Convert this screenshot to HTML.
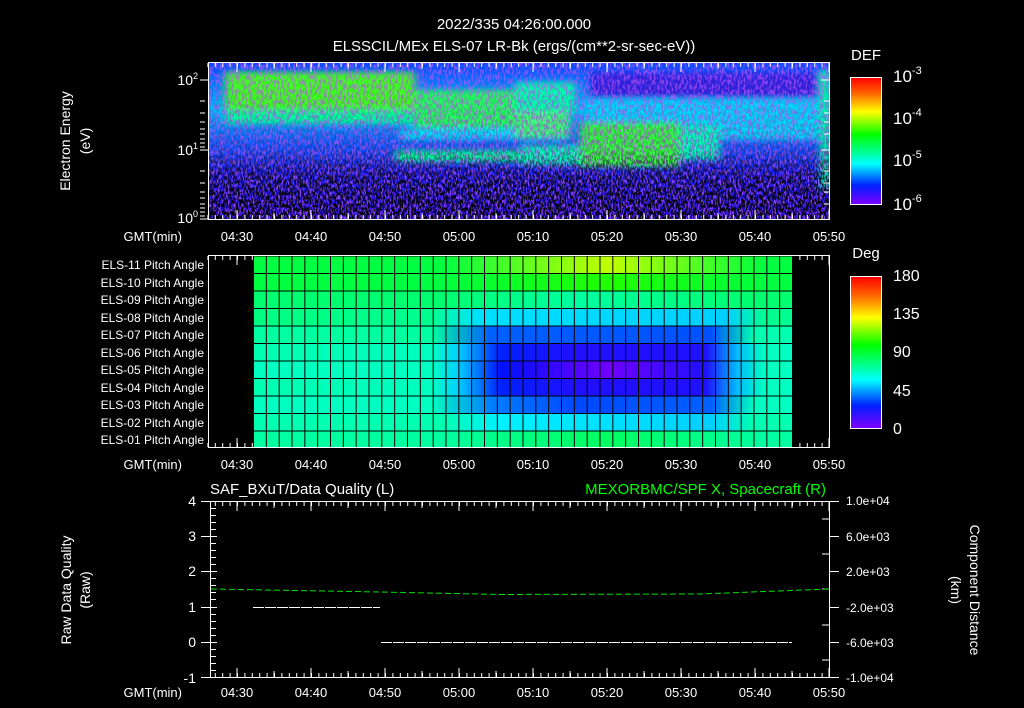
<!DOCTYPE html>
<html><head><meta charset="utf-8"><style>
html,body{margin:0;padding:0;background:#000;}
svg{display:block}
text{font-family:"Liberation Sans",sans-serif;fill:#fff;font-size:13px}
</style></head><body>
<svg width="1024" height="708" viewBox="0 0 1024 708" xmlns="http://www.w3.org/2000/svg">
<defs>
<linearGradient id="cb" x1="0" y1="0" x2="0" y2="1">
<stop offset="0" stop-color="#ff0000"/><stop offset="0.12" stop-color="#ff6000"/><stop offset="0.27" stop-color="#ffff00"/><stop offset="0.45" stop-color="#00ff00"/><stop offset="0.6" stop-color="#00ffa0"/><stop offset="0.68" stop-color="#00ffff"/><stop offset="0.85" stop-color="#0020ff"/><stop offset="1" stop-color="#8000ff"/></linearGradient>
<linearGradient id="spb" x1="0" y1="0" x2="0" y2="1">
<stop offset="0" stop-color="#1040ff"/><stop offset="0.3" stop-color="#00c0ff"/><stop offset="0.5" stop-color="#1060ff"/><stop offset="0.7" stop-color="#2020f0"/><stop offset="1" stop-color="#3010d0"/></linearGradient>
<filter id="nz" x="0" y="0" width="1" height="1"><feTurbulence type="fractalNoise" baseFrequency="0.6 0.25" numOctaves="2" seed="3"/><feColorMatrix type="matrix" values="0 0 0 0 0  0 0 0 0 0  0 0 0 0 0  0 0 0 -9 5"/></filter>
<filter id="nz2" x="0" y="0" width="1" height="1"><feTurbulence type="fractalNoise" baseFrequency="0.5 0.2" numOctaves="2" seed="7"/><feColorMatrix type="matrix" values="0 0 0 0 0.5  0 0 0 0 0.1  0 0 0 0 1  0 0 0 -8 4.2"/></filter>
<filter id="bl"><feGaussianBlur stdDeviation="4 3"/></filter>
<linearGradient id="fade" x1="0" y1="0" x2="0" y2="1"><stop offset="0" stop-color="#fff" stop-opacity="0"/><stop offset="0.55" stop-color="#fff" stop-opacity="0.2"/><stop offset="0.75" stop-color="#fff" stop-opacity="0.8"/><stop offset="1" stop-color="#fff" stop-opacity="1"/></linearGradient>
<mask id="fm"><rect x="208" y="62" width="621" height="158" fill="url(#fade)"/></mask>
<clipPath id="c1"><rect x="209" y="63" width="620" height="156"/></clipPath>

<linearGradient id="r1" gradientUnits="userSpaceOnUse" x1="253" y1="0" x2="792" y2="0"><stop offset="0" stop-color="#00ff40"/><stop offset="0.35" stop-color="#00ff40"/><stop offset="0.66" stop-color="#c0ff00"/><stop offset="0.95" stop-color="#00ff40"/></linearGradient>
<linearGradient id="r2" gradientUnits="userSpaceOnUse" x1="253" y1="0" x2="792" y2="0"><stop offset="0" stop-color="#00ff40"/><stop offset="0.35" stop-color="#00ff40"/><stop offset="0.66" stop-color="#20ff00"/><stop offset="0.95" stop-color="#00ff40"/></linearGradient>
<linearGradient id="r3" gradientUnits="userSpaceOnUse" x1="253" y1="0" x2="792" y2="0"><stop offset="0" stop-color="#00ff70"/><stop offset="0.35" stop-color="#00ff70"/><stop offset="0.6" stop-color="#00ffa0"/><stop offset="0.93" stop-color="#00ff70"/></linearGradient>
<linearGradient id="r4" gradientUnits="userSpaceOnUse" x1="253" y1="0" x2="792" y2="0"><stop offset="0" stop-color="#00ff80"/><stop offset="0.33" stop-color="#00ff90"/><stop offset="0.42" stop-color="#00e0ff"/><stop offset="0.88" stop-color="#00d0ff"/><stop offset="0.95" stop-color="#00ff90"/></linearGradient>
<linearGradient id="r5" gradientUnits="userSpaceOnUse" x1="253" y1="0" x2="792" y2="0"><stop offset="0" stop-color="#00ffa0"/><stop offset="0.33" stop-color="#00ffa0"/><stop offset="0.44" stop-color="#0060ff"/><stop offset="0.85" stop-color="#0050ff"/><stop offset="0.93" stop-color="#00ffb0"/></linearGradient>
<linearGradient id="r6" gradientUnits="userSpaceOnUse" x1="253" y1="0" x2="792" y2="0"><stop offset="0" stop-color="#00ffb0"/><stop offset="0.33" stop-color="#00ffc0"/><stop offset="0.38" stop-color="#00d0ff"/><stop offset="0.46" stop-color="#0020ff"/><stop offset="0.6" stop-color="#2010ff"/><stop offset="0.84" stop-color="#2010ff"/><stop offset="0.9" stop-color="#00c0ff"/><stop offset="0.95" stop-color="#00ffc0"/></linearGradient>
<linearGradient id="r7" gradientUnits="userSpaceOnUse" x1="253" y1="0" x2="792" y2="0"><stop offset="0" stop-color="#00ffc0"/><stop offset="0.33" stop-color="#00ffc0"/><stop offset="0.38" stop-color="#00d0ff"/><stop offset="0.46" stop-color="#0010ff"/><stop offset="0.66" stop-color="#7000ff"/><stop offset="0.84" stop-color="#2010ff"/><stop offset="0.9" stop-color="#00c0ff"/><stop offset="0.95" stop-color="#00ffc0"/></linearGradient>
<linearGradient id="r9" gradientUnits="userSpaceOnUse" x1="253" y1="0" x2="792" y2="0"><stop offset="0" stop-color="#00ffc0"/><stop offset="0.33" stop-color="#00ffc0"/><stop offset="0.44" stop-color="#0080ff"/><stop offset="0.6" stop-color="#0048ff"/><stop offset="0.85" stop-color="#0060ff"/><stop offset="0.93" stop-color="#00ffc0"/></linearGradient>
<linearGradient id="r10" gradientUnits="userSpaceOnUse" x1="253" y1="0" x2="792" y2="0"><stop offset="0" stop-color="#00ffb0"/><stop offset="0.35" stop-color="#00ffb0"/><stop offset="0.46" stop-color="#00f0ff"/><stop offset="0.85" stop-color="#00d0ff"/><stop offset="0.93" stop-color="#00ffb0"/></linearGradient>
<linearGradient id="r11" gradientUnits="userSpaceOnUse" x1="253" y1="0" x2="792" y2="0"><stop offset="0" stop-color="#00ffa0"/><stop offset="0.35" stop-color="#00ffa0"/><stop offset="0.66" stop-color="#00ff60"/><stop offset="0.95" stop-color="#00ffa0"/></linearGradient>

<pattern id="grid" patternUnits="userSpaceOnUse" x="253" y="255.5" width="12.833" height="17.5"><path d="M0 0H12.833M0 0V17.5" stroke="#000" stroke-width="2" fill="none"/></pattern>
</defs>

<text x="514" y="29" text-anchor="middle" style="font-size:15px">2022/335 04:26:00.000</text>
<text x="514" y="51" text-anchor="middle" style="font-size:15px">ELSSCIL/MEx ELS-07 LR-Bk  (ergs/(cm**2-sr-sec-eV))</text>

<!-- top spectrogram -->
<g clip-path="url(#c1)">
<rect x="208" y="62" width="621" height="158" fill="url(#spb)"/>
<g filter="url(#bl)">
<rect x="225" y="72" width="190" height="45" fill="#40ff20"/>
<rect x="225" y="110" width="190" height="14" fill="#00ffa0"/>
<rect x="415" y="90" width="150" height="40" fill="#20ff60"/>
<rect x="400" y="128" width="170" height="12" fill="#00e0ff"/>
<rect x="395" y="150" width="180" height="12" fill="#00ffa0"/>
<rect x="585" y="100" width="240" height="40" fill="#00d8ff"/>
<rect x="515" y="82" width="60" height="30" fill="#00ffb0"/>
<rect x="515" y="112" width="55" height="26" fill="#40ff80"/>
<rect x="520" y="145" width="60" height="20" fill="#00ffc0"/>
<rect x="580" y="122" width="100" height="45" fill="#30ff40"/>
<rect x="680" y="125" width="40" height="35" fill="#00ffc0"/>
<rect x="820" y="70" width="10" height="120" fill="#00ffa0"/>
<rect x="590" y="72" width="230" height="25" fill="#3020e0"/>
</g>
<rect x="208" y="62" width="621" height="158" filter="url(#nz2)" opacity="0.6"/>
<g mask="url(#fm)"><rect x="208" y="62" width="621" height="158" filter="url(#nz)"/></g>
</g>
<rect x="208.5" y="62.5" width="621" height="157" fill="none" stroke="#fff"/>

<!-- x ticks via dasharray -->
<g stroke="#fff" fill="none">
<!-- top panel -->
<path d="M207.4 65H829" stroke-width="4" stroke-dasharray="1 6.4"/>
<path d="M236.5 67.5H829" stroke-width="9" stroke-dasharray="1 73"/>
<path d="M273.5 66H829" stroke-width="6" stroke-dasharray="1 73"/>
<path d="M207.4 217H829" stroke-width="4" stroke-dasharray="1 6.4"/>
<path d="M236.5 214.5H829" stroke-width="9" stroke-dasharray="1 73"/>
<path d="M273.5 216H829" stroke-width="6" stroke-dasharray="1 73"/>
<!-- middle -->
<path d="M207.4 258H829" stroke-width="4" stroke-dasharray="1 6.4"/>
<path d="M236.5 260.5H829" stroke-width="9" stroke-dasharray="1 73"/>
<path d="M273.5 259H829" stroke-width="6" stroke-dasharray="1 73"/>
<path d="M207.4 445H829" stroke-width="4" stroke-dasharray="1 6.4"/>
<path d="M236.5 442.5H829" stroke-width="9" stroke-dasharray="1 73"/>
<path d="M273.5 444H829" stroke-width="6" stroke-dasharray="1 73"/>
<!-- bottom -->
<path d="M214.8 504H829" stroke-width="4" stroke-dasharray="1 6.4"/>
<path d="M236.5 506.5H829" stroke-width="9" stroke-dasharray="1 73"/>
<path d="M273.5 505H829" stroke-width="6" stroke-dasharray="1 73"/>
<path d="M214.8 675H829" stroke-width="4" stroke-dasharray="1 6.4"/>
<path d="M236.5 672.5H829" stroke-width="9" stroke-dasharray="1 73"/>
<path d="M273.5 674H829" stroke-width="6" stroke-dasharray="1 73"/>
</g>

<path d="M200 80h8M200 150h8M200 219h8M200 101h5M200 113h5M200 122h5M200 129h5M200 134h5M200 139h5M200 143h5M200 147h5M200 171h5M200 183h5M200 192h5M200 198h5M200 204h5M200 208h5M200 212h5M200 216h5M829 80h-8M829 150h-8M829 101h-5M829 113h-5M829 122h-5M829 134h-5M829 171h-5M829 183h-5M829 192h-5M829 204h-5" stroke="#fff"/>
<text x="198" y="85" text-anchor="end" style="font-size:14px">10<tspan dy="-6" style="font-size:9px">2</tspan></text>
<text x="198" y="155" text-anchor="end" style="font-size:14px">10<tspan dy="-6" style="font-size:9px">1</tspan></text>
<text x="198" y="223" text-anchor="end" style="font-size:14px">10<tspan dy="-6" style="font-size:9px">0</tspan></text>
<text transform="translate(70,141) rotate(-90)" text-anchor="middle" style="font-size:14px">Electron Energy</text>
<text transform="translate(90,141) rotate(-90)" text-anchor="middle" style="font-size:14px">(eV)</text>
<text x="866" y="60" text-anchor="middle" style="font-size:15px">DEF</text>
<rect x="850.5" y="77.5" width="31" height="127" fill="url(#cb)" stroke="#fff"/>
<text x="893" y="82" style="font-size:17px">10<tspan dy="-8" style="font-size:11px">-3</tspan></text>
<text x="893" y="124" style="font-size:17px">10<tspan dy="-8" style="font-size:11px">-4</tspan></text>
<text x="893" y="166" style="font-size:17px">10<tspan dy="-8" style="font-size:11px">-5</tspan></text>
<text x="893" y="210" style="font-size:17px">10<tspan dy="-8" style="font-size:11px">-6</tspan></text>

<!-- middle pitch angle -->
<rect x="253" y="255.5" width="539" height="17.5" fill="url(#r1)"/>
<rect x="253" y="273" width="539" height="17.5" fill="url(#r2)"/>
<rect x="253" y="290.5" width="539" height="17.5" fill="url(#r3)"/>
<rect x="253" y="308" width="539" height="17.5" fill="url(#r4)"/>
<rect x="253" y="325.5" width="539" height="17.5" fill="url(#r5)"/>
<rect x="253" y="343" width="539" height="17.5" fill="url(#r6)"/>
<rect x="253" y="360.5" width="539" height="17.5" fill="url(#r7)"/>
<rect x="253" y="378" width="539" height="17.5" fill="url(#r6)"/>
<rect x="253" y="395.5" width="539" height="17.5" fill="url(#r9)"/>
<rect x="253" y="413" width="539" height="17.5" fill="url(#r10)"/>
<rect x="253" y="430.5" width="539" height="17.5" fill="url(#r11)"/>
<rect x="253" y="255.5" width="540" height="193" fill="url(#grid)"/>
<rect x="208.5" y="255.5" width="621" height="192" fill="none" stroke="#fff"/>
<g text-anchor="end">
<text x="204" y="269" style="font-size:12px">ELS-11 Pitch Angle</text><text x="204" y="287" style="font-size:12px">ELS-10 Pitch Angle</text><text x="204" y="304" style="font-size:12px">ELS-09 Pitch Angle</text><text x="204" y="322" style="font-size:12px">ELS-08 Pitch Angle</text><text x="204" y="339" style="font-size:12px">ELS-07 Pitch Angle</text><text x="204" y="357" style="font-size:12px">ELS-06 Pitch Angle</text><text x="204" y="374" style="font-size:12px">ELS-05 Pitch Angle</text><text x="204" y="392" style="font-size:12px">ELS-04 Pitch Angle</text><text x="204" y="409" style="font-size:12px">ELS-03 Pitch Angle</text><text x="204" y="427" style="font-size:12px">ELS-02 Pitch Angle</text><text x="204" y="444" style="font-size:12px">ELS-01 Pitch Angle</text>
</g>
<text x="866" y="258" text-anchor="middle" style="font-size:15px">Deg</text>
<rect x="850.5" y="276.5" width="31" height="152" fill="url(#cb)" stroke="#fff"/>
<text x="893" y="281" style="font-size:16px">180</text><text x="893" y="319" style="font-size:16px">135</text><text x="893" y="357" style="font-size:16px">90</text><text x="893" y="396" style="font-size:16px">45</text><text x="893" y="434" style="font-size:16px">0</text>

<!-- bottom panel -->
<text x="210" y="494" style="font-size:15px">SAF_BXuT/Data Quality (L)</text>
<text x="826" y="494" text-anchor="end" style="font-size:15px;fill:#00ff00">MEXORBMC/SPF X, Spacecraft (R)</text>
<rect x="210.5" y="501.5" width="619" height="176" fill="none" stroke="#fff"/>
<path d="M201 501.5h16M201 536.5h16M201 571.5h16M201 607.5h16M201 642.5h16M201 677.5h16M211 508.5h5M211 515.5h5M211 522.5h5M211 529.5h5M211 543.5h5M211 550.5h5M211 557.5h5M211 564.5h5M211 578.5h5M211 585.5h5M211 592.5h5M211 599.5h5M211 614.5h5M211 621.5h5M211 628.5h5M211 635.5h5M211 649.5h5M211 656.5h5M211 663.5h5M211 670.5h5M829 501.5h10M829 536.5h10M829 571.5h10M829 607.5h10M829 642.5h10M829 677.5h10M822 519h7M822 554h7M822 589h7M822 625h7M822 660h7" stroke="#fff"/>
<path d="M211 589 L380 592 L500 594.5 L700 594 L829 589" stroke="#00e000" stroke-width="1" stroke-dasharray="6 3" fill="none"/>
<line x1="253" y1="607.5" x2="380" y2="607.5" stroke="#fff" stroke-dasharray="11 1"/>
<line x1="381" y1="642.5" x2="792" y2="642.5" stroke="#fff" stroke-dasharray="11 1"/>
<g text-anchor="end">
<text x="196" y="506" style="font-size:14px">4</text><text x="196" y="541" style="font-size:14px">3</text><text x="196" y="576" style="font-size:14px">2</text><text x="196" y="612" style="font-size:14px">1</text><text x="196" y="647" style="font-size:14px">0</text><text x="196" y="683" style="font-size:14px">-1</text>
</g>
<text x="846" y="505" style="font-size:12px">1.0e+04</text><text x="846" y="541" style="font-size:12px">6.0e+03</text><text x="846" y="576" style="font-size:12px">2.0e+03</text><text x="846" y="612" style="font-size:12px">-2.0e+03</text><text x="846" y="647" style="font-size:12px">-6.0e+03</text><text x="846" y="682" style="font-size:12px">-1.0e+04</text>
<text transform="translate(71,590) rotate(-90)" text-anchor="middle" style="font-size:14px">Raw Data Quality</text>
<text transform="translate(90,590) rotate(-90)" text-anchor="middle" style="font-size:14px">(Raw)</text>
<text transform="translate(970,590) rotate(90)" text-anchor="middle" style="font-size:14px">Component Distance</text>
<text transform="translate(951,590) rotate(90)" text-anchor="middle" style="font-size:14px">(km)</text>

<!-- x labels -->
<g text-anchor="middle">
<text x="182" y="241" text-anchor="end">GMT(min)</text>
<text x="237" y="241">04:30</text><text x="311" y="241">04:40</text><text x="385" y="241">04:50</text><text x="459" y="241">05:00</text><text x="533" y="241">05:10</text><text x="607" y="241">05:20</text><text x="681" y="241">05:30</text><text x="755" y="241">05:40</text><text x="829" y="241">05:50</text>
<text x="182" y="469" text-anchor="end">GMT(min)</text>
<text x="237" y="469">04:30</text><text x="311" y="469">04:40</text><text x="385" y="469">04:50</text><text x="459" y="469">05:00</text><text x="533" y="469">05:10</text><text x="607" y="469">05:20</text><text x="681" y="469">05:30</text><text x="755" y="469">05:40</text><text x="829" y="469">05:50</text>
<text x="182" y="697" text-anchor="end">GMT(min)</text>
<text x="237" y="697">04:30</text><text x="311" y="697">04:40</text><text x="385" y="697">04:50</text><text x="459" y="697">05:00</text><text x="533" y="697">05:10</text><text x="607" y="697">05:20</text><text x="681" y="697">05:30</text><text x="755" y="697">05:40</text><text x="829" y="697">05:50</text>
</g>
</svg>
</body></html>
